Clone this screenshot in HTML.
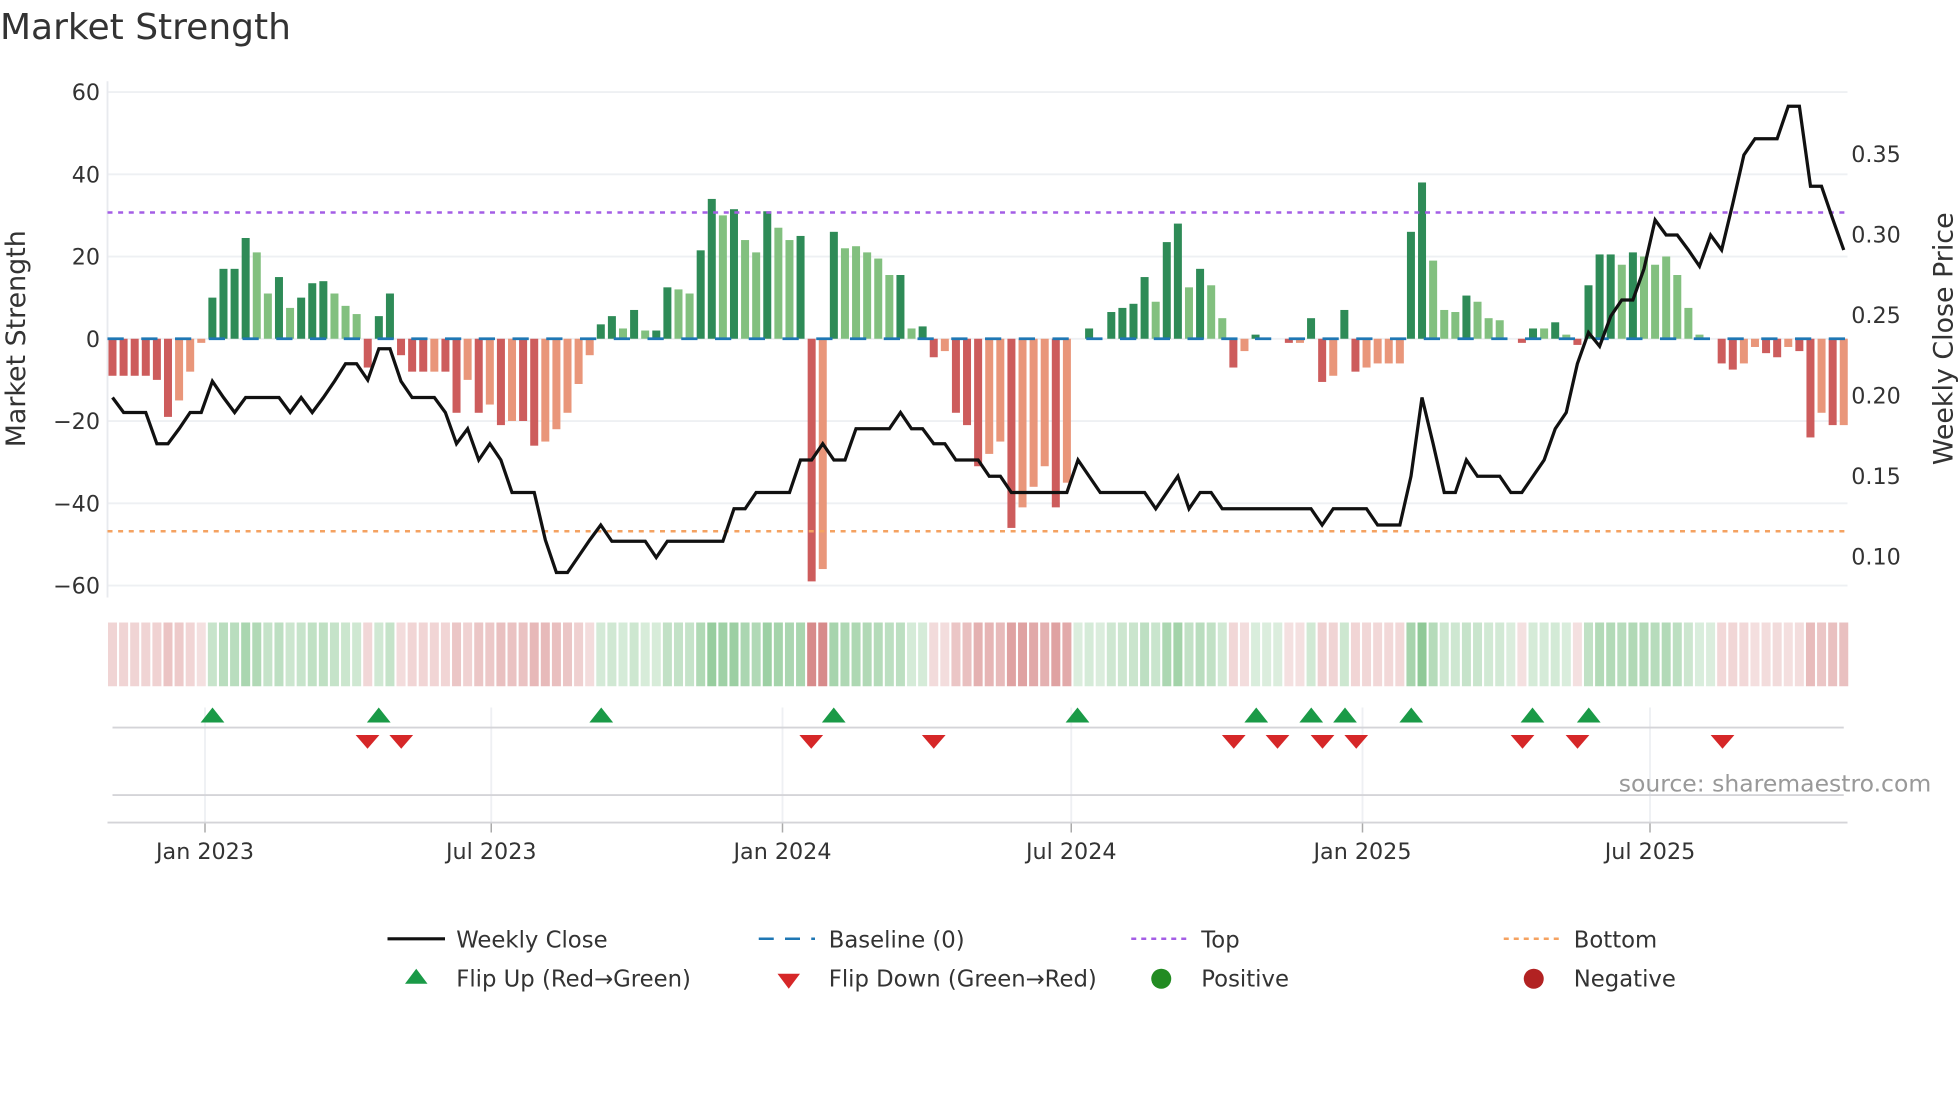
<!DOCTYPE html>
<html><head><meta charset="utf-8">
<style>
html,body{margin:0;padding:0;background:#fff;width:1960px;height:1102px;overflow:hidden}
svg{display:block}
text{font-family:"DejaVu Sans","Liberation Sans",sans-serif;fill:#333}
</style></head><body>
<svg id="s" width="1960" height="1102" viewBox="0 0 1568 881.6" xmlns="http://www.w3.org/2000/svg">
<text x="0" y="31" font-size="28.8">Market Strength</text>
<g id="grid"></g>
<g id="bars"></g>
<g id="over"></g>
<text transform="translate(20,271) rotate(-90)" text-anchor="middle" font-size="21.5">Market Strength</text>
<text transform="translate(1562,271) rotate(-90)" text-anchor="middle" font-size="21.5">Weekly Close Price</text>
<text x="1545" y="633" text-anchor="end" font-size="18.8" style="fill:#999">source: sharemaestro.com</text>
<g font-size="18.2">
<line x1="310" y1="751" x2="356" y2="751" stroke="#111" stroke-width="2.5"/>
<text x="365" y="758">Weekly Close</text>
<line x1="607" y1="751" x2="652" y2="751" stroke="#1f77b4" stroke-width="2" stroke-dasharray="12,9"/>
<text x="663" y="758">Baseline (0)</text>
<line x1="905" y1="751" x2="950" y2="751" stroke="#a45ee5" stroke-width="2" stroke-dasharray="4,4"/>
<text x="961" y="758">Top</text>
<line x1="1203" y1="751" x2="1248" y2="751" stroke="#f4a261" stroke-width="2" stroke-dasharray="4,4"/>
<text x="1259" y="758">Bottom</text>
<polygon points="333,775 342,787 324,787" fill="#1a9a47"/>
<text x="365" y="789">Flip Up (Red→Green)</text>
<polygon points="622,779 640,779 631,791" fill="#d62728"/>
<text x="663" y="789">Flip Down (Green→Red)</text>
<circle cx="929" cy="783" r="8" fill="#228b22"/>
<text x="961" y="789">Positive</text>
<circle cx="1227" cy="783" r="8" fill="#b22222"/>
<text x="1259" y="789">Negative</text>
</g>
</svg>
<script>
var NS="http://www.w3.org/2000/svg";
function el(p,t,a,txt){var e=document.createElementNS(NS,t);for(var k in a)e.setAttribute(k,a[k]);if(txt!==undefined)e.textContent=txt;document.getElementById(p).appendChild(e);return e;}
var V=[[-9,1],[-9,1],[-9,1],[-9,1],[-10,1],[-19,1],[-15,0],[-8,0],[-1,0],[10,1],[17,1],[17,1],[24.5,1],[21,0],[11,0],[15,1],[7.5,0],[10,1],[13.5,1],[14,1],[11,0],[8,0],[6,0],[-7,1],[5.5,1],[11,1],[-4,1],[-8,1],[-8,1],[-8,0],[-8,1],[-18,1],[-10,0],[-18,1],[-16,0],[-21,1],[-20,0],[-20,1],[-26,1],[-25,0],[-22,0],[-18,0],[-11,0],[-4,0],[3.5,1],[5.5,1],[2.5,0],[7,1],[2,0],[2,1],[12.5,1],[12,0],[11,0],[21.5,1],[34,1],[30,0],[31.5,1],[24,0],[21,0],[31,1],[27,0],[24,0],[25,1],[-59,1],[-56,0],[26,1],[22,0],[22.5,0],[21,0],[19.5,0],[15.5,0],[15.5,1],[2.5,0],[3,1],[-4.5,1],[-3,0],[-18,1],[-21,1],[-31,1],[-28,0],[-25,0],[-46,1],[-41,0],[-36,0],[-31,0],[-41,1],[-35,0],[0,1],[2.5,1],[0,1],[6.5,1],[7.5,1],[8.5,1],[15,1],[9,0],[23.5,1],[28,1],[12.5,0],[17,1],[13,0],[5,0],[-7,1],[-3,0],[1,1],[0,1],[0,1],[-1,1],[-1,0],[5,1],[-10.5,1],[-9,0],[7,1],[-8,1],[-7,0],[-6,0],[-6,0],[-6,0],[26,1],[38,1],[19,0],[7,0],[6.5,0],[10.5,1],[9,0],[5,0],[4.5,0],[0,1],[-1,1],[2.5,1],[2.5,0],[4,1],[1,0],[-1.5,1],[13,1],[20.5,1],[20.5,1],[18,0],[21,1],[20,0],[18,0],[20,0],[15.5,0],[7.5,0],[1,0],[0,1],[-6,1],[-7.5,1],[-6,0],[-2,0],[-3.5,1],[-4.5,1],[-2,0],[-3,1],[-24,1],[-18,0],[-21,1],[-21,0]];
var X0=90,DX=(1475-90)/156,Y0=271,U=3.29;
[60,40,20,0,-20,-40,-60].forEach(function(v){var y=Y0-v*U;el("grid","line",{x1:86,x2:1478,y1:y,y2:y,stroke:"#eef0f3","stroke-width":1.5});el("grid","text",{x:80,y:y+6.5,"text-anchor":"end","font-size":"17.8"},(v<0?"\u2212"+(-v):v));});
[0.35,0.30,0.25,0.20,0.15,0.10].forEach(function(p){var y=445-(p-0.10)*1288;el("grid","text",{x:1481,y:y+6.5,"font-size":"17.8"},p.toFixed(2));});
el("grid","line",{x1:86,x2:86,y1:65,y2:478,stroke:"#e8eaee","stroke-width":1.5});
[[164,"Jan 2023"],[393,"Jul 2023"],[626,"Jan 2024"],[857,"Jul 2024"],[1090,"Jan 2025"],[1320,"Jul 2025"]].forEach(function(t){
el("grid","line",{x1:t[0],x2:t[0],y1:566,y2:658,stroke:"#eef0f3","stroke-width":1.5});
el("grid","line",{x1:t[0],x2:t[0],y1:658,y2:666,stroke:"#aaa","stroke-width":1.2});
el("grid","text",{x:t[0],y:687,"text-anchor":"middle","font-size":"17.8"},t[1]);});
el("grid","line",{x1:90,x2:1475,y1:582,y2:582,stroke:"#d4d4d8","stroke-width":1.5});
el("grid","line",{x1:90,x2:1475,y1:636,y2:636,stroke:"#d4d4d8","stroke-width":1.5});
el("grid","line",{x1:86,x2:1478,y1:658,y2:658,stroke:"#d4d4d8","stroke-width":1.5});
V.forEach(function(d,i){var x=X0+i*DX,v=d[0];var c=v>=0?(d[1]?"#2e8b57":"#82c07f"):(d[1]?"#cd5c5c":"#e9967a");
if(v!=0){var h=Math.abs(v)*U;el("bars","rect",{x:x-3.2,y:v>0?Y0-h:Y0,width:6.4,height:h,fill:c});}
var a=0.25+Math.min(Math.abs(v),40)/40*0.55;if(Math.abs(v)>50)a=1;
var hc=v>=0?"rgba(110,185,120,"+a+")":"rgba(205,110,110,"+(a*0.8)+")";
el("bars","rect",{x:x-3.6,y:498,width:7.2,height:51,fill:hc});});
el("over","line",{x1:86,x2:1478,y1:Y0,y2:Y0,stroke:"#1f77b4","stroke-width":2.2,"stroke-dasharray":"13,14"});
el("over","line",{x1:86,x2:1478,y1:170,y2:170,stroke:"#a45ee5","stroke-width":2,"stroke-dasharray":"4,4.5"});
el("over","line",{x1:86,x2:1478,y1:425,y2:425,stroke:"#f4a261","stroke-width":2,"stroke-dasharray":"4,4.5"});
var P=[318,330,330,330,355,355,343,330,330,305,318,330,318,318,318,318,330,318,330,318,305,291,291,304,279,279,305,318,318,318,330,355,343,368,355,368,394,394,394,432,458,458,445,432,420,433,433,433,433,446,433,433,433,433,433,433,407,407,394,394,394,394,368,368,355,368,368,343,343,343,343,330,343,343,355,355,368,368,368,381,381,394,394,394,394,394,394,368,381,394,394,394,394,394,407,394,381,407,394,394,407,407,407,407,407,407,407,407,407,420,407,407,407,407,420,420,420,381,318,355,394,394,368,381,381,381,394,394,381,368,343,330,291,266,277,253,240,240,215,176,188,188,200,213,188,200,163,124,111,111,111,85,85,149,149,175,200];
var pts=P.map(function(y,i){return (X0+i*DX).toFixed(1)+","+y;}).join(" ");
el("over","polyline",{points:pts,fill:"none",stroke:"#111","stroke-width":2.6,"stroke-linejoin":"miter"});
[170,303,481,667,862,1005,1049,1076,1129,1226,1271].forEach(function(x){el("over","polygon",{points:(x)+",566 "+(x+9.5)+",578 "+(x-9.5)+",578",fill:"#1a9a47"});});
[294,321,649,747,987,1022,1058,1085,1218,1262,1378].forEach(function(x){el("over","polygon",{points:(x-9.5)+",588 "+(x+9.5)+",588 "+x+",599",fill:"#d62728"});});
</script>
</body></html>
